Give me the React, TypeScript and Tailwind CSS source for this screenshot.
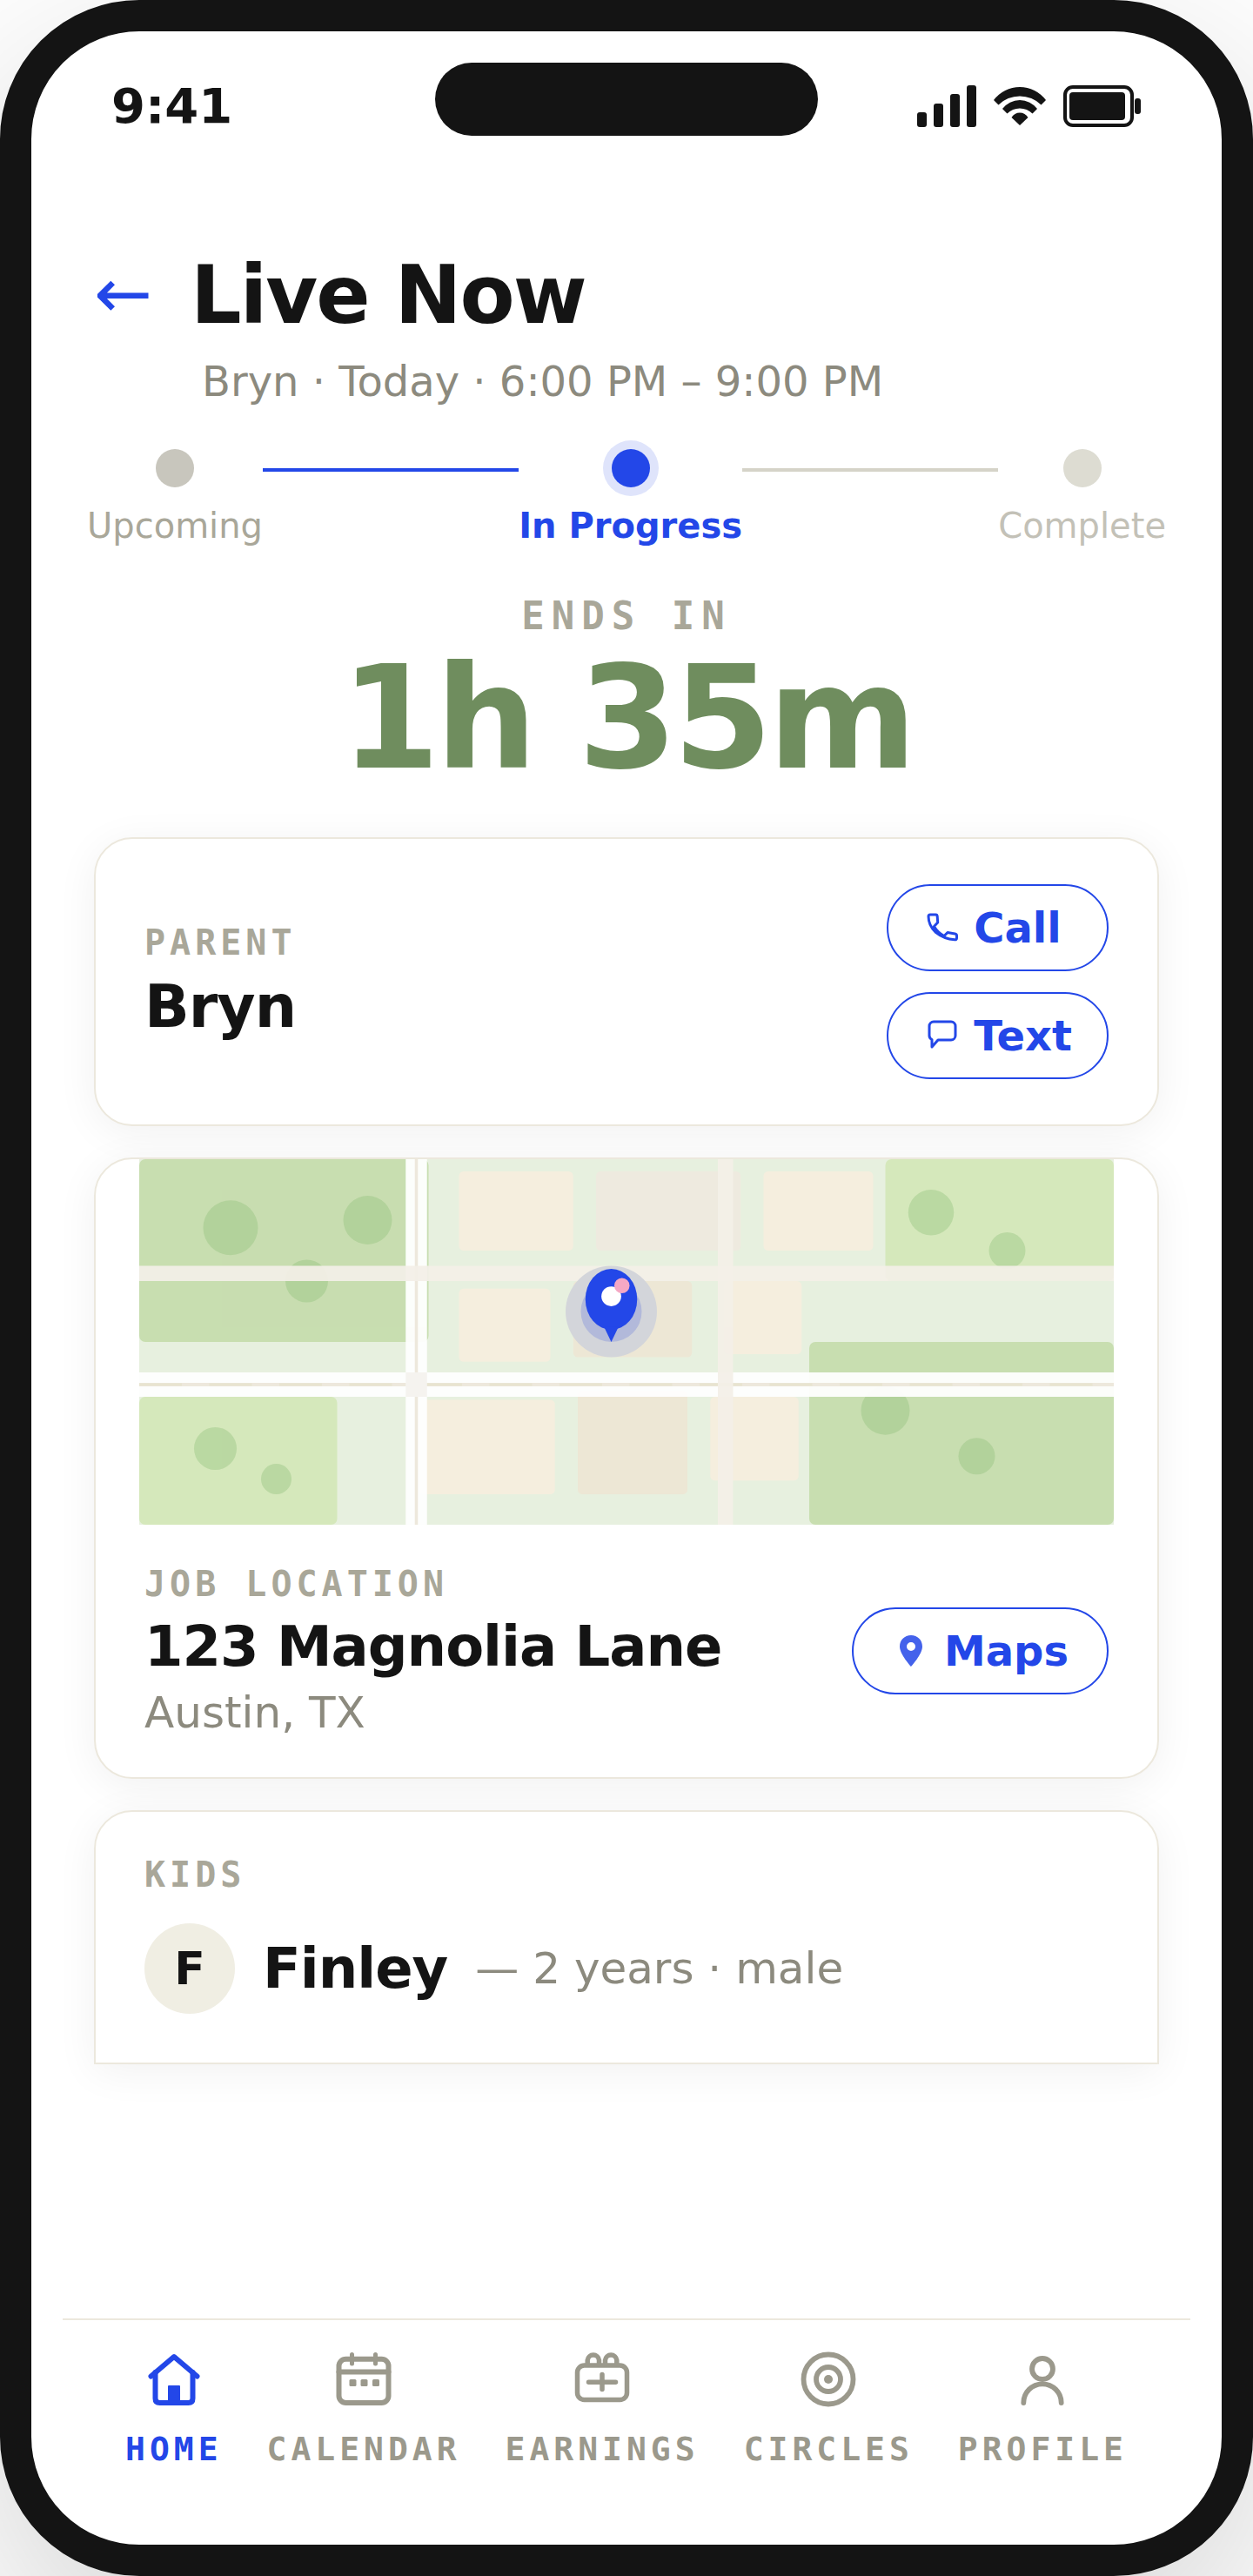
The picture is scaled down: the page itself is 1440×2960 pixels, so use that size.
import React from 'react';

interface Step {
    label: string;
    dot: string;
    text: string;
}

const steps: Step[] = [
    { label: 'Upcoming', dot: 'bg-[#c8c6bd]', text: 'text-[#a9a799]' },
    { label: 'In Progress', dot: 'bg-[#2347e8] ring-[10px] ring-[#dfe4fb]', text: 'text-[#2347e8] font-bold' },
    { label: 'Complete', dot: 'bg-[#dddcd2]', text: 'text-[#c3c1b7]' },
];

const SignalIcon = () => (
    <svg width="68" height="48" viewBox="0 0 68 48" fill="currentColor">
        <rect x="0" y="31" width="11" height="17" rx="3" />
        <rect x="19" y="21" width="11" height="27" rx="3" />
        <rect x="38" y="10" width="11" height="38" rx="3" />
        <rect x="57" y="0" width="11" height="48" rx="3" />
    </svg>
);

const WifiIcon = () => (
    <svg width="60" height="44" viewBox="0 0 60 44" fill="currentColor">
        <path d="M0 15A37.5 37.5 0 0 1 60 15L54.5 20.5A35 35 0 0 0 5.5 20.5Z" />
        <path d="M10 25A25 25 0 0 1 50 25L44.5 30.5A20.5 20.5 0 0 0 15.5 30.5Z" />
        <path d="M20.5 35A11 11 0 0 1 39.5 35L30 44Z" />
    </svg>
);

const BatteryIcon = () => (
    <svg width="90" height="48" viewBox="0 0 90 48" fill="none">
        <rect x="2" y="2" width="77" height="44" rx="9" stroke="currentColor" strokeWidth="4" />
        <rect x="7" y="8" width="64" height="32" rx="4" fill="currentColor" />
        <rect x="82" y="15" width="7" height="18" rx="3" fill="currentColor" />
    </svg>
);

const PhoneIcon = () => (
    <svg width="44" height="44" viewBox="0 0 44 44" fill="none" stroke="currentColor" strokeWidth="3" strokeLinejoin="round">
        <path d="M6 9Q6 7 8 7H14.5Q16 7 16.2 9L16.7 16L12.5 20.5Q16.5 27.5 24 31.5L28 27.5L36.5 29Q38.5 29.4 38.5 31V34Q38.5 36 36 35.8Q24 35 14 27Q6 19 6 9Z" />
    </svg>
);

const MessageIcon = () => (
    <svg width="44" height="44" viewBox="0 0 44 44" fill="none" stroke="currentColor" strokeWidth="3" strokeLinejoin="round">
        <path d="M12 6H32A5 5 0 0 1 37 11V22A5 5 0 0 1 32 27H17L10 35V26.5A5 5 0 0 1 7 22V11A5 5 0 0 1 12 6Z" />
    </svg>
);

const PinIcon = () => (
    <svg width="44" height="44" viewBox="0 0 44 44">
        <path fillRule="evenodd" opacity="0.85" fill="currentColor" d="M22 4C14.5 4 9 9.5 9 17C9 26 22 40 22 40S35 26 35 17C35 9.5 29.5 4 22 4ZM22 12A5 5 0 1 1 22 22A5 5 0 0 1 22 12Z" />
    </svg>
);

const HomeIcon = () => (
    <svg width="80" height="80" viewBox="0 0 80 80" fill="none" stroke="currentColor" strokeWidth="6" strokeLinecap="round" strokeLinejoin="round">
        <path d="M13.5 36.5L40 14L66.500 36.5" />
        <path d="M18.5 32V62Q18.5 67 23.5 67H56.5Q61.5 67 61.5 62V32" />
        <rect x="33" y="47" width="14" height="20" rx="1" fill="currentColor" stroke="none" />
    </svg>
);

const CalendarIcon = () => (
    <svg width="80" height="80" viewBox="0 0 80 80" fill="none" stroke="currentColor" strokeWidth="6" strokeLinecap="round">
        <rect x="11.5" y="16.7" width="57" height="50.3" rx="8" />
        <path d="M11.5 31.5H68.5" />
        <path strokeWidth="5" d="M26.5 11.5V22M53.5 11.5V22" />
        <g fill="currentColor" stroke="none">
            <rect x="23.5" y="40" width="8" height="8" rx="1.5" />
            <rect x="36.5" y="40" width="8" height="8" rx="1.5" />
            <rect x="50" y="40" width="8" height="8" rx="1.5" />
        </g>
    </svg>
);

const EarningsIcon = () => (
    <svg width="80" height="80" viewBox="0 0 80 80" fill="none" stroke="currentColor" strokeWidth="5.5" strokeLinecap="round">
        <rect x="11.5" y="24" width="57" height="39.5" rx="8" />
        <path d="M23.2 23V18A6.7 6.7 0 0 1 36.5 18V23M43.5 23V18A6.7 6.7 0 0 1 56.8 18V23" />
        <path d="M24.5 43.2H55.5M40 34.5V51.5" />
    </svg>
);

const CirclesIcon = () => (
    <svg width="80" height="80" viewBox="0 0 80 80" fill="none" stroke="currentColor" strokeWidth="5.8">
        <circle cx="40" cy="40" r="28.5" />
        <circle cx="40" cy="40" r="14" />
        <circle cx="40" cy="40" r="5" fill="currentColor" stroke="none" />
    </svg>
);

const ProfileIcon = () => (
    <svg width="80" height="80" viewBox="0 0 80 80" fill="none" stroke="currentColor" strokeWidth="5.8" strokeLinecap="round">
        <circle cx="40" cy="28" r="12" />
        <path d="M18.3 67A21.7 21.7 0 0 1 61.7 67" />
    </svg>
);

const navItems = [
    { label: 'HOME', icon: HomeIcon, active: true },
    { label: 'CALENDAR', icon: CalendarIcon, active: false },
    { label: 'EARNINGS', icon: EarningsIcon, active: false },
    { label: 'CIRCLES', icon: CirclesIcon, active: false },
    { label: 'PROFILE', icon: ProfileIcon, active: false },
];

const LocationMap = () => (
    <svg className="block w-full h-[420px]" viewBox="0 0 320 120" role="img" aria-label="Map">
        <rect width="320" height="120" fill="#e7f0df" />

        {/* Parks */}
        <rect x="0" y="0" width="95" height="60" rx="2" fill="#c8deb0" />
        <rect x="245" y="0" width="75" height="40" rx="2" fill="#d5e8bb" />
        <rect x="0" y="78" width="65" height="42" rx="2" fill="#d5e8bb" />
        <rect x="220" y="60" width="100" height="60" rx="2" fill="#c8deb0" />

        {/* Blocks */}
        <g fill="#f5eede">
            <rect x="105" y="4" width="37.5" height="26" rx="1.5" />
            <rect x="205" y="4" width="36" height="26" rx="1.5" />
            <rect x="105" y="42.5" width="30" height="24" rx="1.5" />
            <rect x="192" y="40" width="25.5" height="24" rx="1.5" />
            <rect x="92" y="79" width="44.5" height="31" rx="1.5" />
            <rect x="187.5" y="78" width="29" height="27.5" rx="1.5" />
        </g>
        <rect x="150" y="4" width="47.5" height="26" rx="1.5" fill="#eeeadf" />
        <rect x="142.5" y="40" width="39" height="25" rx="1.5" fill="#ede7d5" />
        <rect x="144" y="76" width="36" height="34" rx="1.5" fill="#ede7d5" />

        {/* Trees */}
        <g fill="#8fbf7a" opacity="0.38">
            <circle cx="30" cy="22.5" r="9" />
            <circle cx="75" cy="20" r="8" />
            <circle cx="55" cy="40" r="7" />
            <circle cx="260" cy="17.5" r="7.5" />
            <circle cx="285" cy="30" r="6" />
            <circle cx="25" cy="95" r="7" />
            <circle cx="45" cy="105" r="5" />
            <circle cx="245" cy="82.5" r="8" />
            <circle cx="275" cy="97.5" r="6" />
        </g>

        {/* Roads */}
        <path d="M0 74H320" stroke="#ffffff" strokeWidth="8" opacity="0.95" />
        <path d="M91 0V120" stroke="#ffffff" strokeWidth="7" opacity="0.95" />
        <path d="M0 74H320" stroke="#ede8dc" strokeWidth="1.2" />
        <path d="M0 74H320" stroke="#e8e4d0" strokeWidth="0.8" strokeDasharray="14 9" />
        <path d="M91 0V120" stroke="#ede8dc" strokeWidth="1" />
        <path d="M0 37.5H320" stroke="#f4f0e8" strokeWidth="5" opacity="0.93" />
        <path d="M192.5 0V120" stroke="#f4f0e8" strokeWidth="5" opacity="0.93" />
        <rect x="87.5" y="70" width="7" height="8" fill="#f5f3ef" />

        {/* Pin */}
        <circle cx="155" cy="50" r="15" fill="#d3d5da" />
        <circle cx="155" cy="50" r="10" fill="#b2b9da" />
        <ellipse cx="155" cy="46" rx="8.5" ry="10" fill="#2347e8" />
        <path d="M152.6 55H157.4L155 60Z" fill="#2347e8" />
        <circle cx="155" cy="45" r="3.25" fill="#ffffff" />
        <circle cx="158.5" cy="41.5" r="2.5" fill="#f5a8c4" />
    </svg>
);

interface PillButtonProps {
    icon: React.ReactNode;
    label: string;
    spacing?: string;
}

const PillButton = ({ icon, label, spacing = 'gap-[14px] px-10' }: PillButtonProps) => (
    <button
        type="button"
        className={`flex items-center h-[100px] rounded-full border-2 border-[#2347e8] bg-white text-[#2347e8] text-[48px] leading-[56px] font-bold ${spacing}`}
    >
        {icon}
        {label}
    </button>
);

const CardLabel = ({ children }: { children: React.ReactNode }) => (
    <p className="font-['DejaVu_Sans_Mono',monospace] font-bold text-[40px] leading-[48px] tracking-[5px] text-[#a9a799]">
        {children}
    </p>
);

const card = 'bg-white border-2 border-[#ece8dd] shadow-[0_8px_48px_rgba(20,20,20,0.06)]';

const App = () => {
    return (
        <div className="min-h-screen flex bg-white font-['DejaVu_Sans',sans-serif] text-[#141414]">
            <div className="relative flex-1 flex flex-col border-[36px] border-[#141414] rounded-[160px] bg-white shadow-[0_80px_240px_rgba(0,0,0,0.18)]">
                <div className="absolute top-9 left-1/2 -translate-x-1/2 w-[440px] h-[84px] rounded-full bg-[#141414]" />

                {/* Status bar */}
                <div className="flex items-center justify-between h-[172px] px-[92px]">
                    <span className="text-[56px] leading-[56px] font-bold">9:41</span>
                    <div className="flex items-center gap-5">
                        <SignalIcon />
                        <WifiIcon />
                        <BatteryIcon />
                    </div>
                </div>

                <main className="flex-1 flex flex-col px-[72px] pt-[78px]">
                    {/* Header */}
                    <header>
                        <div className="flex items-center gap-11">
                            <button type="button" aria-label="Back" className="pb-1 text-[80px] leading-[100px] text-[#2347e8]">
                                ←
                            </button>
                            <h1 className="text-[92px] leading-[108px] font-bold tracking-[-2px]">Live Now</h1>
                        </div>
                        <p className="mt-[14px] pl-[124px] text-[48px] leading-[60px] text-[#8c8a7e]">
                            Bryn · Today · 6:00 PM – 9:00 PM
                        </p>
                    </header>

                    {/* Progress */}
                    <ol className="flex items-start mt-12 -mx-2">
                        {steps.map((step, index) => (
                            <React.Fragment key={step.label}>
                                {index > 0 && (
                                    <li
                                        aria-hidden="true"
                                        className={`flex-1 h-1 mt-[22px] ${index === 1 ? 'bg-[#2347e8]' : 'bg-[#d5d3c8]'}`}
                                    />
                                )}
                                <li className="flex flex-col items-center gap-5">
                                    <span className={`w-11 h-11 rounded-full ${step.dot}`} />
                                    <span className={`text-[40px] leading-[48px] ${step.text}`}>{step.label}</span>
                                </li>
                            </React.Fragment>
                        ))}
                    </ol>

                    {/* Countdown */}
                    <div className="mt-[54px] text-center">
                        <p className="font-['DejaVu_Sans_Mono',monospace] font-bold text-[44px] leading-[52px] tracking-[8px] text-[#a9a799]">
                            ENDS IN
                        </p>
                        <p className="mt-[10px] text-[164px] leading-[164px] font-bold tracking-[-5px] text-[#6f8d5e]">1h 35m</p>
                    </div>

                    <div className="flex flex-col gap-9 mt-[54px]">
                        {/* Parent */}
                        <section className={`flex items-center justify-between px-14 py-[52px] rounded-[44px] ${card}`}>
                            <div className="flex flex-col gap-[10px]">
                                <CardLabel>PARENT</CardLabel>
                                <h2 className="text-[68px] leading-[80px] font-bold tracking-[-1px]">Bryn</h2>
                            </div>
                            <div className="flex flex-col gap-6">
                                <PillButton icon={<PhoneIcon />} label="Call" />
                                <PillButton icon={<MessageIcon />} label="Text" />
                            </div>
                        </section>

                        {/* Location */}
                        <section className={`overflow-hidden rounded-[44px] ${card}`}>
                            <LocationMap />
                            <div className="flex items-center justify-between px-14 py-11">
                                <div>
                                    <CardLabel>JOB LOCATION</CardLabel>
                                    <h2 className="mt-[10px] text-[64px] leading-[76px] font-bold tracking-[-1px]">123 Magnolia Lane</h2>
                                    <p className="mt-2 text-[50px] leading-[60px] text-[#8c8a7e]">Austin, TX</p>
                                </div>
                                <PillButton icon={<PinIcon />} label="Maps" spacing="gap-4 px-11" />
                            </div>
                        </section>

                        {/* Kids */}
                        <section className={`px-14 pt-12 pb-14 rounded-t-[44px] ${card}`}>
                            <CardLabel>KIDS</CardLabel>
                            <div className="flex items-center gap-8 mt-8">
                                <span className="flex items-center justify-center w-[104px] h-[104px] rounded-full bg-[#f0eee3] text-[52px] leading-[60px] font-bold">
                                    F
                                </span>
                                <h2 className="text-[64px] leading-[76px] font-bold tracking-[-1px]">Finley</h2>
                                <p className="text-[50px] leading-[60px] text-[#8c8a7e]">— 2 years · male</p>
                            </div>
                        </section>
                    </div>
                </main>

                {/* Tab bar */}
                <nav className="flex items-start justify-between mx-9 px-[72px] pt-7 pb-[88px] border-t-2 border-[#ece8dd]">
                    {navItems.map(({ label, icon: Icon, active }) => (
                        <a
                            key={label}
                            href="#"
                            className={`flex flex-col items-center gap-[18px] font-['DejaVu_Sans_Mono',monospace] font-bold text-[38px] leading-[44px] tracking-[5px] ${active ? 'text-[#2347e8]' : 'text-[#9b998c]'}`}
                        >
                            <Icon />
                            {label}
                        </a>
                    ))}
                </nav>
            </div>
        </div>
    );
};

export default App;
